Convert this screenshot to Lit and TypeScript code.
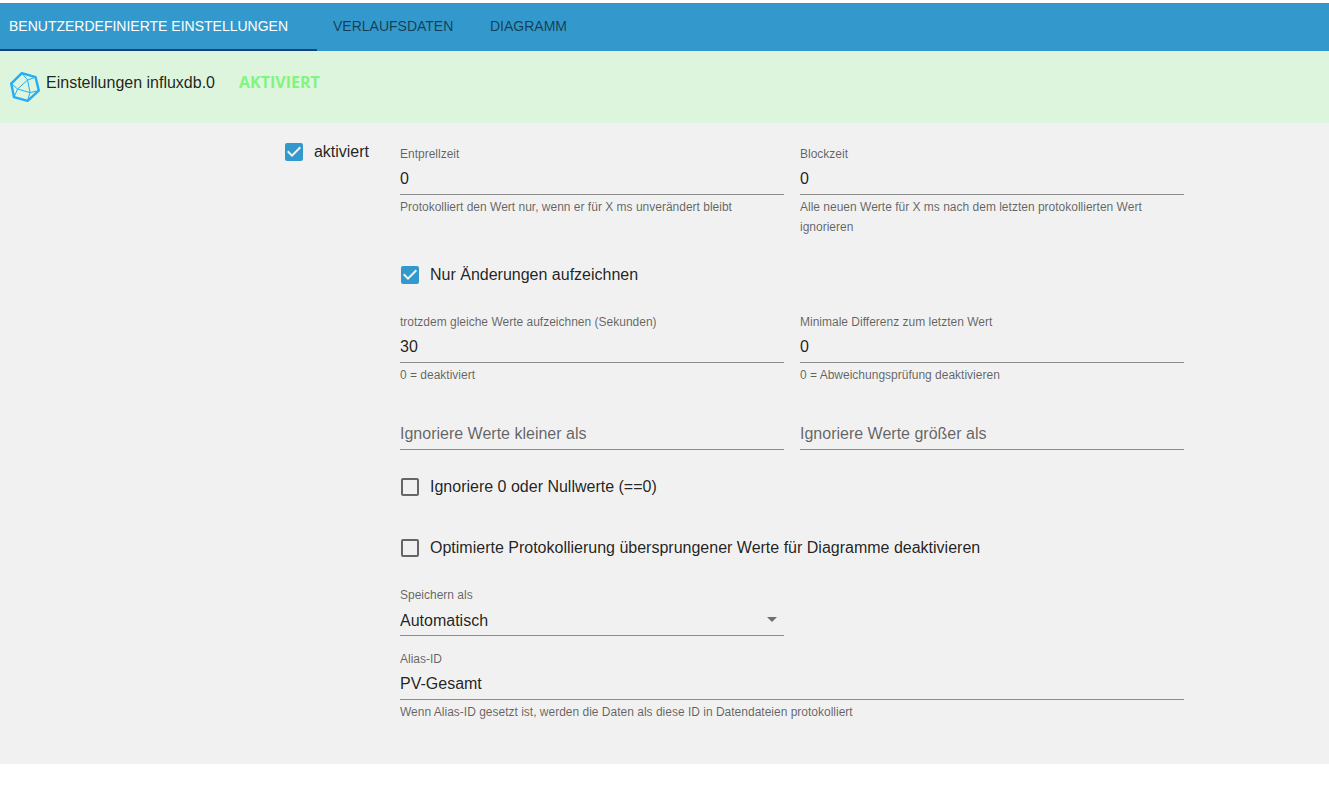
import { LitElement, html, css, nothing } from "lit";
import { customElement, property, state } from "lit/decorators.js";

const TICKED =
  "M19 3H5c-1.11 0-2 .9-2 2v14c0 1.1.89 2 2 2h14c1.11 0 2-.9 2-2V5c0-1.1-.89-2-2-2zm-9 14l-5-5 1.41-1.41L10 14.17l7.59-7.59L19 8l-9 9z";
const BLANK =
  "M19 5v14H5V5h14m0-2H5c-1.1 0-2 .9-2 2v14c0 1.1.9 2 2 2h14c1.1 0 2-.9 2-2V5c0-1.1-.9-2-2-2z";

@customElement("check-option")
class CheckOption extends LitElement {
  @property() label = "";
  @property({ type: Boolean }) checked = false;

  static styles = css`
    :host {
      display: block;
    }
    .option {
      display: flex;
      align-items: center;
      gap: 8px;
      width: fit-content;
      font-size: 16px;
      line-height: 24px;
      color: rgba(0, 0, 0, 0.87);
      cursor: pointer;
    }
    .box {
      display: grid;
      width: 24px;
      height: 24px;
      flex: none;
    }
    .input,
    .icon {
      grid-area: 1 / 1;
      width: 24px;
      height: 24px;
      margin: 0;
    }
    .input {
      appearance: none;
      cursor: pointer;
    }
    .icon {
      fill: #666;
      pointer-events: none;
    }
    .input:checked + .icon {
      fill: #3399cc;
    }
  `;

  private toggle(e: Event) {
    this.checked = (e.target as HTMLInputElement).checked;
  }

  render() {
    return html`<label class="option">
      <span class="box">
        <input class="input" type="checkbox" .checked=${this.checked} @change=${this.toggle} />
        <svg class="icon" viewBox="0 0 24 24" aria-hidden="true">
          <path d=${this.checked ? TICKED : BLANK}></path>
        </svg>
      </span>
      <span>${this.label}</span>
    </label>`;
  }
}

@customElement("text-option")
class TextOption extends LitElement {
  @property() label = "";
  @property() value = "";
  @property() hint = "";
  @property({ type: Array }) options: string[] = [];

  static styles = css`
    :host {
      display: block;
      min-width: 0;
    }
    .label {
      display: block;
      height: 16px;
      font-size: 12px;
      line-height: 16px;
      color: rgba(0, 0, 0, 0.6);
    }
    .wrap {
      display: grid;
      align-items: center;
      height: 33px;
      box-sizing: border-box;
      border-bottom: 1px solid #8d8d8d;
    }
    .control {
      grid-area: 1 / 1;
      appearance: none;
      width: 100%;
      height: 32px;
      box-sizing: border-box;
      margin: 0;
      padding: 2px 0 0;
      border: 0;
      border-radius: 0;
      outline: none;
      background: none;
      font-family: inherit;
      font-size: 16px;
      color: rgba(0, 0, 0, 0.87);
    }
    .control::placeholder {
      color: rgba(0, 0, 0, 0.6);
      opacity: 1;
    }
    .arrow {
      grid-area: 1 / 1;
      justify-self: end;
      width: 24px;
      height: 24px;
      fill: rgba(0, 0, 0, 0.54);
      pointer-events: none;
    }
    .hint {
      margin: 0;
      padding: 2px 0 1px;
      font-size: 12px;
      line-height: 20px;
      color: rgba(0, 0, 0, 0.6);
    }
  `;

  render() {
    const floating = this.value !== "";
    return html`
      <label class="label" for="control">${floating ? this.label : nothing}</label>
      <div class="wrap">
        ${this.options.length
          ? html`<select class="control" id="control">
                ${this.options.map((o) => html`<option ?selected=${o === this.value}>${o}</option>`)}
              </select>
              <svg class="arrow" viewBox="0 0 24 24" aria-hidden="true"><path d="M7 10l5 5 5-5z"></path></svg>`
          : html`<input
              class="control"
              id="control"
              type="text"
              aria-label=${this.label}
              placeholder=${floating ? nothing : this.label}
              .value=${this.value}
            />`}
      </div>
      ${this.hint ? html`<p class="hint">${this.hint}</p>` : nothing}
    `;
  }
}

@customElement("app-root")
class AppRoot extends LitElement {
  @state() private tab = 0;

  private tabs = ["Benutzerdefinierte Einstellungen", "Verlaufsdaten", "Diagramm"];

  static styles = css`
    :host {
      display: block;
      padding-top: 3px;
      background: #fff;
      font-family: "Liberation Sans", Arial, sans-serif;
      color: rgba(0, 0, 0, 0.87);
    }
    .tabs {
      display: grid;
      grid-template-columns: 317px 157px auto;
      justify-content: start;
      height: 48px;
      background: #3399cc;
    }
    .tab {
      padding: 0 16px;
      border: 0;
      border-bottom: 2px solid transparent;
      background: none;
      font-family: inherit;
      font-size: 14px;
      line-height: 24px;
      text-align: left;
      text-transform: uppercase;
      white-space: nowrap;
      color: rgba(0, 0, 0, 0.6);
      cursor: pointer;
    }
    .tab:first-child {
      padding-left: 9px;
    }
    .tab[aria-selected="true"] {
      border-bottom-color: #164477;
      color: #fff;
    }
    .header {
      display: flex;
      align-items: flex-start;
      height: 72px;
      box-sizing: border-box;
      padding: 20px 9px 0;
      background: #ddf4dd;
    }
    .logo {
      width: 32px;
      height: 32px;
      flex: none;
    }
    .title {
      min-width: 198px;
      margin: 0;
      padding-left: 5px;
      box-sizing: border-box;
      font-size: 16px;
      font-weight: 400;
      line-height: 24px;
      flex: none;
    }
    .status {
      font-family: "Open Sans", sans-serif;
      font-size: 16px;
      font-weight: 700;
      line-height: 22px;
      color: #80f580;
    }
    .panel {
      display: grid;
      grid-template-columns: minmax(0, 400fr) minmax(0, 784fr) minmax(0, 145fr);
      padding: 17px 0 41px;
      background: #f1f1f1;
    }
    .enable {
      justify-self: end;
      padding-right: 31px;
    }
    .fields {
      display: grid;
      grid-template-columns: minmax(0, 1fr) minmax(0, 1fr);
      gap: 15px 16px;
      padding-top: 6px;
    }
    .wide {
      grid-column: 1 / -1;
    }
    .check {
      grid-column: 1 / -1;
      padding: 10px 0 12px;
      margin-left: -2px;
    }
    .half {
      grid-column: 1;
    }
  `;

  render() {
    return html`
      <nav class="tabs" role="tablist">
        ${this.tabs.map(
          (t, i) => html`<button
            class="tab"
            role="tab"
            aria-selected=${this.tab === i ? "true" : "false"}
            @click=${() => (this.tab = i)}
          >${t}</button>`
        )}
      </nav>
      <header class="header">
        <svg class="logo" viewBox="0 0 32 32" aria-hidden="true" fill="none" stroke="#22adf6" stroke-linejoin="round">
          <path stroke-width="2.4" d="M12.8 2.2 26.6 6.2 29.8 19.6 18.6 29.8 5 26.2 2.2 12.6z"></path>
          <path
            stroke-width="1"
            d="M12.8 2.2 18.6 9 26.6 6.2M18.6 9 8.6 18 2.2 12.6M8.6 18 5 26.2M8.6 18 21 21.6 18.6 9M21 21.6 29.8 19.6M21 21.6 18.6 29.8"
          ></path>
        </svg>
        <h1 class="title">Einstellungen influxdb.0</h1>
        <span class="status">AKTIVIERT</span>
      </header>
      <main class="panel">
        <check-option class="enable" label="aktiviert" checked></check-option>
        <div class="fields">
          <text-option
            label="Entprellzeit"
            value="0"
            hint="Protokolliert den Wert nur, wenn er für X ms unverändert bleibt"
          ></text-option>
          <text-option
            label="Blockzeit"
            value="0"
            hint="Alle neuen Werte für X ms nach dem letzten protokollierten Wert ignorieren"
          ></text-option>
          <check-option class="check" label="Nur Änderungen aufzeichnen" checked></check-option>
          <text-option
            label="trotzdem gleiche Werte aufzeichnen (Sekunden)"
            value="30"
            hint="0 = deaktiviert"
          ></text-option>
          <text-option
            label="Minimale Differenz zum letzten Wert"
            value="0"
            hint="0 = Abweichungsprüfung deaktivieren"
          ></text-option>
          <text-option label="Ignoriere Werte kleiner als"></text-option>
          <text-option label="Ignoriere Werte größer als"></text-option>
          <check-option class="check" label="Ignoriere 0 oder Nullwerte (==0)"></check-option>
          <check-option
            class="check"
            label="Optimierte Protokollierung übersprungener Werte für Diagramme deaktivieren"
          ></check-option>
          <text-option class="half" label="Speichern als" value="Automatisch" .options=${["Automatisch", "Zahl", "Text", "Logikwert"]}></text-option>
          <text-option
            class="wide"
            label="Alias-ID"
            value="PV-Gesamt"
            hint="Wenn Alias-ID gesetzt ist, werden die Daten als diese ID in Datendateien protokolliert"
          ></text-option>
        </div>
      </main>
    `;
  }
}
